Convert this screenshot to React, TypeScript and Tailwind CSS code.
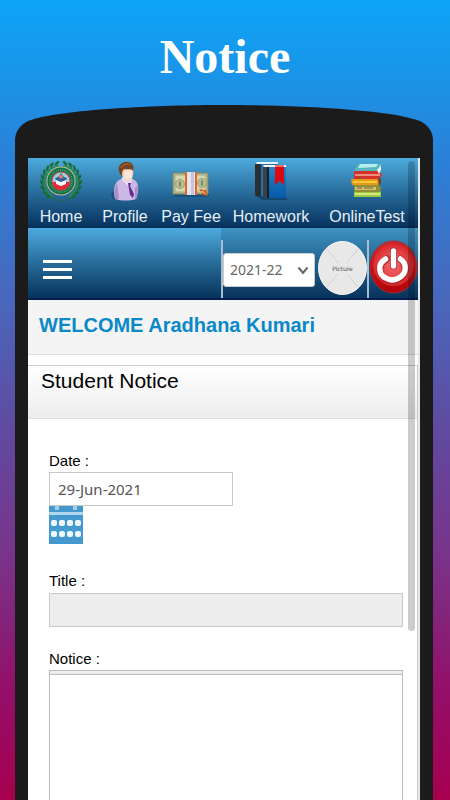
import type { ReactNode } from "react"
import clsx from "clsx"

const leafAngles = [18, 34, 50, 66, 82, 98, 114, 130, 146]

function CrestIcon() {
  return (
    <svg viewBox="0 0 44 42" className="h-[42px] w-11" aria-hidden="true">
      {[1, -1].map((side) => (
        <g key={side} transform={side === 1 ? undefined : "translate(44 0) scale(-1 1)"}>
          <path d="M23 40C36 38 41 29 40 20C39.500 12 36 6 32 3" fill="none" stroke="#1c6b3d" strokeWidth="1" />
          {leafAngles.map((a) => (
            <g key={a} transform={`rotate(${a} 22 21)`}>
              <ellipse cx="20" cy="1.800" rx="3" ry="1.200" transform="rotate(28 20 1.800)" fill="#176b35" />
              <ellipse cx="21" cy="4.800" rx="2.800" ry="1.100" transform="rotate(-28 21 4.800)" fill="#2b8747" />
            </g>
          ))}
        </g>
      ))}
      <circle cx="22" cy="20" r="14.500" fill="#c9b9a0" />
      <circle cx="22" cy="20" r="13.600" fill="#0f7344" />
      <circle cx="22" cy="20" r="11" fill="none" stroke="#5aa67c" strokeWidth="1.500" strokeDasharray="1 1.200" />
      <circle cx="22" cy="20" r="9" fill="#9ed0ea" stroke="#d64a48" strokeWidth="1.200" />
      <path d="M13.500 21H18L22 25L26 21H30.500C30 26 26.500 29 22 29S14 26 13.500 21Z" fill="#e02c38" />
      <path d="M22 12L25 16L28 17L26 21L22 23L18 21L16 17L19 16Z" fill="#315f9c" />
      <path d="M17 19L22 21L27 19V23L22 25L17 23Z" fill="#f3f6fa" />
      <circle cx="22" cy="15.500" r="2" fill="#e2854c" />
    </svg>
  )
}

function ProfileIcon() {
  return (
    <svg viewBox="0 0 30 40" className="h-10 w-[30px]" aria-hidden="true">
      <ellipse cx="7" cy="34" rx="6" ry="5" fill="#0a3158" opacity="0.4" />
      <path d="M5 38C3 28 4 21 11 18L20 17C27 19 29 23 28 31L26 38C20 40 11 40 5 38Z" fill="#cdb7e5" />
      <path d="M5 38C4 31 5 26 7 22L9 38ZM25 38L25 27L28 24L27 37Z" fill="#a88fcc" />
      <path d="M12 16H21L22 20L18 25L12 19Z" fill="#e9dcf5" />
      <path d="M18 22L21 22L20 25L24 33L23 37L20 34Z" fill="#61318d" />
      <path d="M11 9C11 4 21 3 23 8C24 14 22 20 18 20C14 20 12 15 11 9Z" fill="#f4cfb5" />
      <path d="M14 10L22 9L22 17L17 19L14 16Z" fill="#fae5d8" />
      <path d="M10 13C7 7 9 2 15 1C21 0 25 4 23 10C21 7 17 9 14 8C12 10 12 12 12 15Z" fill="#744522" />
      <path d="M11 7C13 3 17 2 21 4" stroke="#a66e3b" strokeWidth="1" fill="none" />
    </svg>
  )
}

function MoneyIcon() {
  return (
    <svg viewBox="0 0 38 40" className="h-10 w-[38px]" aria-hidden="true">
      <path d="M2 33H37V36H2Z" fill="#0b355c" opacity="0.4" />
      <path d="M1 12H36V33H1Z" fill="#b5b98f" stroke="#7e8762" />
      <path d="M3 14H34V31H3Z" fill="#d7d8b2" stroke="#a3aa85" />
      <circle cx="8" cy="23" r="4.500" fill="#b9bd94" stroke="#98a17c" />
      <circle cx="30" cy="22" r="4.500" fill="#b9bd94" stroke="#98a17c" />
      <path d="M7 20.500H9V25.500H7ZM29 19.500H31V24.500H29Z" fill="#7d8a64" />
      <path d="M13 11H25V34H13Z" fill="#e5642a" />
      <path d="M15 11H23V34H15Z" fill="#e6e5ef" />
      <path d="M19 11H22V34H19Z" fill="#c3c5dc" />
      <path d="M27 28L34 29L36 35L31 34Z" fill="#c66425" />
      <path d="M29 30L34 33M28 32L32 30" stroke="#efb66d" strokeWidth="1" />
    </svg>
  )
}

function BooksIcon() {
  return (
    <svg viewBox="0 0 36 40" className="h-10 w-9" aria-hidden="true">
      <defs>
        <linearGradient id="bookCover" x1="0" y1="0" x2="0" y2="1">
          <stop stopColor="#2b83bf" />
          <stop offset="1" stopColor="#0459ac" />
        </linearGradient>
      </defs>
      <path d="M2 35L10 39H34V36Z" fill="#06294b" opacity="0.5" />
      <path d="M2 3H8V35H3Q2 35 2 33Z" fill="#2b2f34" />
      <path d="M3 2Q3 1 5 1H25V3H4Z" fill="#e6f4fa" />
      <path d="M8 3H25V35H8Z" fill="#2272ab" />
      <path d="M10 6H15V37H11Q10 37 10 35Z" fill="#3b4047" />
      <path d="M10 5Q10 4 12 4H33V6H11Z" fill="#f3f8fb" />
      <path d="M15 6H33V37H15Z" fill="url(#bookCover)" />
      <path d="M14 6H16V37H14Z" fill="#16202a" />
      <path d="M22 4H31V24L26.500 20L22 24Z" fill="#de0813" />
      <path d="M22 4H31V6H22Z" fill="#f26a6c" />
    </svg>
  )
}

function BookStackIcon() {
  return (
    <svg viewBox="0 0 34 40" className="h-10 w-[34px]" aria-hidden="true">
      <path d="M4 30L29 29L31 31V36H4Z" fill="#9cc839" />
      <path d="M5 32H30V34H5Z" fill="#d4e88a" />
      <path d="M4 24L29 23L31 27L30 31H4Z" fill="#8e8f36" />
      <path d="M5 26H26V29H5Z" fill="#cfc272" />
      <path d="M1 18L28 17L30 20L28 24L2 24Z" fill="#e89916" />
      <path d="M3 20H27V22H3Z" fill="#f8ca3c" />
      <path d="M4 10L29 9L32 14L29 18L4 18Z" fill="#d6302d" />
      <path d="M5 13H30V15H5Z" fill="#ee8f7c" />
      <path d="M8 3L31 3L29 10L4 10Z" fill="#55b6c0" />
      <path d="M10 3L28 3L26 6L8 7Z" fill="#b7f0ea" />
      <path d="M27 9L31 4V9L29 13Z" fill="#e9f4ee" />
      <path d="M28 18L31 17V22L29 25Z" fill="#714429" />
      <path d="M7 27H12M14 27H23M8 17H15" stroke="#8c552b" strokeWidth="1" />
    </svg>
  )
}

function PowerIcon() {
  return (
    <svg viewBox="0 0 50 54" preserveAspectRatio="none" className="h-[54px] w-[49px]" aria-hidden="true">
      <defs>
        <linearGradient id="powerRim" x1="0" y1="0" x2="0" y2="1">
          <stop stopColor="#d0292c" />
          <stop offset="1" stopColor="#b30208" />
        </linearGradient>
        <radialGradient id="powerFace">
          <stop stopColor="#f0686a" />
          <stop offset="0.6" stopColor="#e5484b" />
          <stop offset="1" stopColor="#d8282c" />
        </radialGradient>
      </defs>
      <ellipse cx="25" cy="27" rx="24" ry="26" fill="url(#powerRim)" stroke="#a32a33" />
      <ellipse cx="25" cy="25" rx="21" ry="21" fill="url(#powerFace)" />
      <path d="M18 19C8 24 10 36 17 39C25 44 37 38 37 29C37 24 35 21 32 19M25 11V26" fill="none" stroke="#b5262b" strokeWidth="7" strokeLinecap="round" />
      <path d="M17 19C8 24 10 35 17 38C25 43 37 37 37 28C37 24 35 21 32 19M25 11V26" fill="none" stroke="#fff" strokeWidth="5.500" strokeLinecap="round" />
    </svg>
  )
}

function CalendarIcon() {
  return (
    <svg viewBox="0 0 34 38" className="h-[38px] w-[34px]" aria-hidden="true">
      <path d="M0 0H34V38H0Z" fill="#4499cf" />
      <path d="M0 6H34V9H0Z" fill="#b1d7ee" />
      <path d="M6 0H10V4H6ZM24 0H28V4H24Z" fill="#a6d0ea" />
      {[2, 10, 18, 26].map((x) => (
        <g key={x} fill="#eff8ff">
          <rect x={x} y="14" width="6" height="6" rx="2" />
          <rect x={x} y="25" width="6" height="6" rx="2" />
        </g>
      ))}
    </svg>
  )
}

interface NavItem {
  label: string
  icon: ReactNode
}

const navItems: NavItem[] = [
  { label: "Home", icon: <CrestIcon /> },
  { label: "Profile", icon: <ProfileIcon /> },
  { label: "Pay Fee", icon: <MoneyIcon /> },
  { label: "Homework", icon: <BooksIcon /> },
  { label: "OnlineTest", icon: <BookStackIcon /> },
]

function TopNav() {
  return (
    <nav className="grid h-[70px] grid-cols-[66fr_62fr_70fr_90fr_102fr] border-b border-[#062c52] bg-gradient-to-b from-[#4dabdd] to-[#07335f] pt-0.5">
      {navItems.map((item) => (
        <a key={item.label} href="#" className="flex flex-col items-center text-base leading-5 whitespace-nowrap text-[#e6eef6]">
          <span className="flex h-[47px] items-start pt-px">{item.icon}</span>
          {item.label}
        </a>
      ))}
    </nav>
  )
}

function Toolbar() {
  return (
    <div className="flex h-[72px] border-b-2 border-[#071c50] bg-gradient-to-b from-[#4093c2] to-[#07335c]">
      <div className="flex flex-1 items-center bg-gradient-to-b from-[#4dabdd] to-[#07335c] px-[15px] pt-3">
        <button type="button" aria-label="Menu" className="flex flex-col gap-[5px]">
          <span className="h-[3px] w-[29px] bg-white" />
          <span className="h-[3px] w-[29px] bg-white" />
          <span className="h-[3px] w-[29px] bg-white" />
        </button>
      </div>
      <div className="mt-3 flex border-l-2 border-[#a9bfd0]">
        <div className="relative mt-[13px] h-[34px] w-[92px]">
          <select
            aria-label="Session"
            defaultValue="2021-22"
            className="h-full w-full appearance-none rounded-[3px] border border-[#ccc] bg-white pl-1.5 font-['Noto_Sans',sans-serif] text-sm text-[#666]"
          >
            <option>2021-22</option>
          </select>
          <svg viewBox="0 0 12 12" className="pointer-events-none absolute top-[11px] right-[6px] h-3 w-3" aria-hidden="true">
            <path d="M1.500 3.500L6 9L10.500 3.500" fill="none" stroke="#666" strokeWidth="2" />
          </svg>
        </div>
        <svg viewBox="0 0 49 54" className="mt-px ml-[3px] h-[54px] w-[49px]" role="img" aria-label="Profile picture">
          <ellipse cx="24.500" cy="27" rx="24" ry="26.500" fill="#e8e8e8" stroke="#f7f7f7" />
          <path d="M9 8L40 46M40 8L9 46" stroke="#d2d2d2" strokeWidth="1" />
          <path d="M12 22H37V33H12Z" fill="#e8e8e8" />
          <text x="24.500" y="30" textAnchor="middle" fontSize="6" fontFamily="DejaVu Sans" fill="#555">
            Picture
          </text>
        </svg>
        <div className="border-l-2 border-[#a9bfd0]">
          <button type="button" aria-label="Log out" className="block">
            <PowerIcon />
          </button>
        </div>
      </div>
    </div>
  )
}

function NoticeForm() {
  const label = "block text-[15px] leading-5 text-black"
  const field = "h-[34px] border border-[#c8c8c8]"

  return (
    <form className="flex flex-1 flex-col pt-8 pr-[14px] pl-[21px]">
      <label htmlFor="date" className={label}>Date :</label>
      <input
        id="date"
        defaultValue="29-Jun-2021"
        className={clsx(field, "mt-px w-[184px] bg-white px-2 font-['Noto_Sans',sans-serif] text-[15px] text-[#555]")}
      />
      <button type="button" aria-label="Choose date" className="self-start">
        <CalendarIcon />
      </button>
      <label htmlFor="title" className={clsx(label, "mt-[27px]")}>Title :</label>
      <input id="title" readOnly className={clsx(field, "mt-0.5 bg-[#ededed] px-2")} />
      <label htmlFor="notice" className={clsx(label, "mt-[22px]")}>Notice :</label>
      <div className="mt-px flex min-h-[130px] flex-1 flex-col border-x border-t border-[#bbb]">
        <div className="h-1 border-b border-[#bbb] bg-[#ededed]" />
        <textarea id="notice" className="w-full flex-1 resize-none bg-white p-2" />
      </div>
    </form>
  )
}

export default function App() {
  return (
    <div className="flex min-h-screen flex-col bg-[linear-gradient(to_bottom,#0ca5f7_0%,#2a81d7_20%,#4a66bb_38%,#604a9f_54%,#793389_70%,#940e67_87%,#a8004f_100%)] font-['Liberation_Sans',Arial,sans-serif]">
      <h1 className="h-[105px] pt-[30px] text-center font-['Liberation_Serif',serif] text-[48px] leading-[54px] font-bold text-white">
        Notice
      </h1>
      <div className="mr-[17px] ml-[15px] flex flex-1 flex-col">
        <svg viewBox="0 0 418 53" preserveAspectRatio="none" className="block h-[53px] w-full" aria-hidden="true">
          <path d="M0 53V35C0 27 5 20 13 16C45 4 145 0 209 0S373 4 405 16C413 20 418 27 418 35V53Z" fill="#1b1b1b" />
        </svg>
        <div className="flex flex-1 flex-col bg-[#1b1b1b] px-[13px]">
          <main className="relative flex flex-1 flex-col border-r-2 border-[#e8e8e8] bg-white">
            <TopNav />
            <Toolbar />
            <h2 className="h-[55px] border-b border-[#ddd] bg-[#f4f4f4] pt-3 pl-[11px] text-xl leading-[26px] font-bold text-[#0b88c8]">
              WELCOME Aradhana Kumari
            </h2>
            <section className="mt-2.5 flex flex-1 flex-col border-t border-r border-[#ccc]">
              <h3 className="h-[53px] border-b border-[#ddd] bg-gradient-to-b from-white to-[#ededed] pt-0.5 pl-[13px] text-[21px] leading-[26px] text-black">
                Student Notice
              </h3>
              <NoticeForm />
            </section>
            <div className="pointer-events-none absolute top-[3px] right-[3px] h-[470px] w-[7px] rounded-full bg-black/20" />
          </main>
        </div>
      </div>
    </div>
  )
}
